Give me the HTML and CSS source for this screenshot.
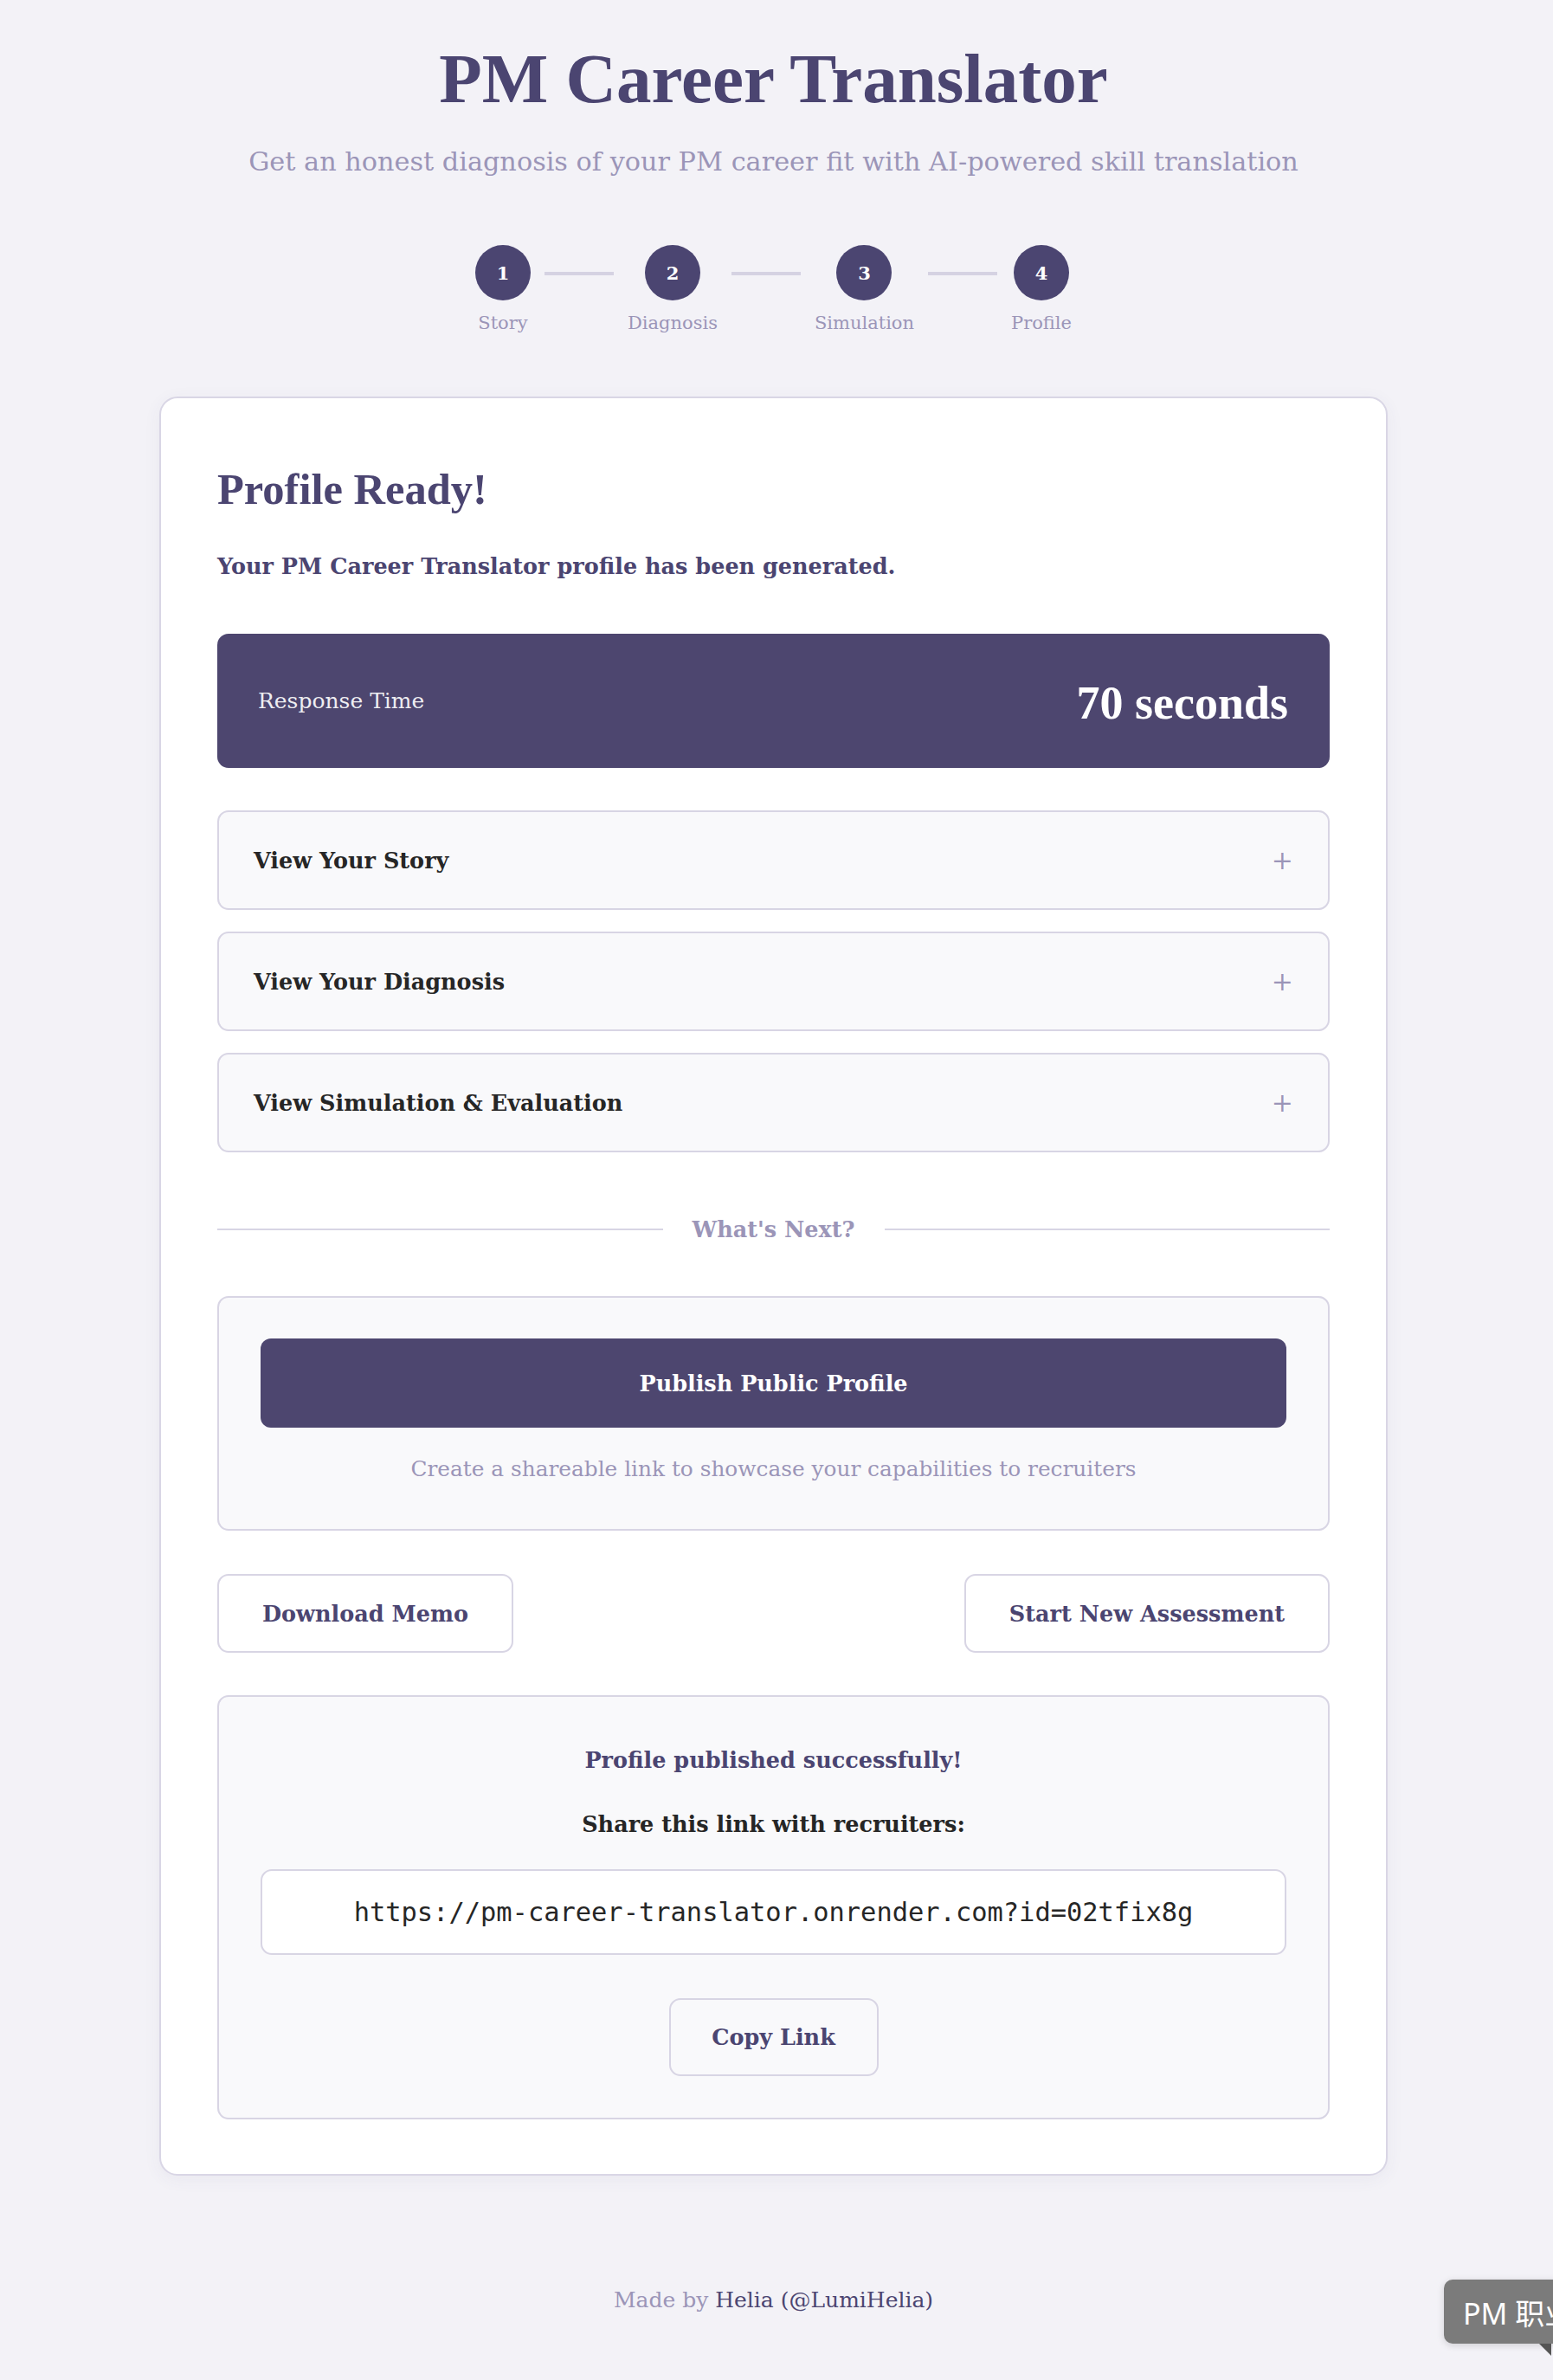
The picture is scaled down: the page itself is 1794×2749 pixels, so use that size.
FILE: index.html
```html
<!DOCTYPE html>
<html lang="en">
<head>
<meta charset="utf-8">
<title>PM Career Translator</title>
<link rel="stylesheet" href="styles.css">
</head>
<body>
<div class="page">
  <header class="header">
    <h1 class="title">PM Career Translator</h1>
    <p class="subtitle">Get an honest diagnosis of your PM career fit with AI-powered skill translation</p>
    <div class="steps">
      <div class="step"><div class="step-num">1</div><div class="step-label">Story</div></div>
      <div class="step-line"></div>
      <div class="step"><div class="step-num">2</div><div class="step-label">Diagnosis</div></div>
      <div class="step-line"></div>
      <div class="step"><div class="step-num">3</div><div class="step-label">Simulation</div></div>
      <div class="step-line"></div>
      <div class="step"><div class="step-num">4</div><div class="step-label">Profile</div></div>
    </div>
  </header>

  <main class="card">
    <h2 class="card-title">Profile Ready!</h2>
    <p class="card-lead">Your PM Career Translator profile has been generated.</p>

    <div class="metric">
      <span class="metric-label">Response Time</span>
      <span class="metric-value">70 seconds</span>
    </div>

    <div class="accordion">
      <div class="acc-item"><span class="acc-title">View Your Story</span><span class="acc-icon">+</span></div>
      <div class="acc-item"><span class="acc-title">View Your Diagnosis</span><span class="acc-icon">+</span></div>
      <div class="acc-item"><span class="acc-title">View Simulation &amp; Evaluation</span><span class="acc-icon">+</span></div>
    </div>

    <div class="divider"><span class="divider-line"></span><span class="divider-text">What's Next?</span><span class="divider-line"></span></div>

    <section class="publish">
      <button class="btn-primary">Publish Public Profile</button>
      <p class="publish-note">Create a shareable link to showcase your capabilities to recruiters</p>
    </section>

    <div class="actions">
      <button class="btn-outline">Download Memo</button>
      <button class="btn-outline">Start New Assessment</button>
    </div>

    <section class="success">
      <p class="success-title">Profile published successfully!</p>
      <p class="success-sub">Share this link with recruiters:</p>
      <input class="link-field" type="text" readonly value="https://pm-career-translator.onrender.com?id=02tfix8g">
      <button class="btn-copy">Copy Link</button>
    </section>
  </main>

  <footer class="footer">Made by <span class="footer-name">Helia (@LumiHelia)</span></footer>
</div>

<div class="float-tip">PM 职业<span class="tip-tail"></span></div>
</body>
</html>
```

FILE: styles.css
```css
* { box-sizing: border-box; }

html { background: #f3f2f7; }

body {
  margin: 0;
  min-height: 2749px;
  position: relative;
  overflow-x: hidden;
  font-family: "DejaVu Serif", "Liberation Serif", serif;
  color: #2a2a2a;
  background: #f3f2f7;
}

.page {
  width: 1787px;
  padding-top: 43px;
}

.header { text-align: center; }

.title {
  margin: 0;
  font-family: "Liberation Serif", serif;
  font-weight: 700;
  font-size: 81px;
  line-height: 96px;
  color: #4b4571;
}

.subtitle {
  margin: 28px 0 0;
  font-size: 30.3px;
  line-height: 40px;
  color: #9b95b8;
}

.steps {
  display: flex;
  justify-content: center;
  gap: 16px;
  margin-top: 76px;
}

.step {
  display: flex;
  flex-direction: column;
  align-items: center;
}

.step-num {
  width: 64px;
  height: 64px;
  border-radius: 50%;
  background: #4b4571;
  color: #fff;
  font-weight: 700;
  font-size: 21px;
  display: flex;
  align-items: center;
  justify-content: center;
}

.step-label {
  margin-top: 12px;
  font-size: 21px;
  line-height: 29px;
  color: #9b95b8;
}

.step-line {
  width: 80px;
  height: 4px;
  background: #d5d2e2;
  margin-top: 31px;
}

.card {
  display: block;
  width: 1419px;
  margin: 70px auto 0;
  background: #fff;
  border: 2px solid #d9d6e5;
  border-radius: 21px;
  padding: 76px 65px 63px;
  box-shadow: 0 4px 20px rgba(75, 69, 113, 0.06);
}

.card-title {
  margin: 0;
  font-family: "Liberation Serif", serif;
  font-weight: 700;
  font-size: 50.5px;
  line-height: 59px;
  color: #4b4571;
}

.card-lead {
  margin: 40px 0 0;
  font-weight: 700;
  font-size: 25.5px;
  line-height: 38px;
  color: #4b4571;
}

.metric {
  margin-top: 59px;
  height: 155px;
  background: #4d466f;
  border-radius: 13px;
  padding: 0 48px 0 47px;
  display: flex;
  align-items: center;
  justify-content: space-between;
  color: #fff;
}

.metric-label {
  font-size: 25px;
  color: rgba(255, 255, 255, 0.92);
}

.metric-value {
  font-family: "Liberation Serif", serif;
  font-weight: 700;
  font-size: 54px;
  margin-top: 4px;
}

.accordion {
  margin-top: 49px;
  display: flex;
  flex-direction: column;
  gap: 25px;
}

.acc-item {
  height: 115px;
  background: #f9f9fb;
  border: 2px solid #d8d5e4;
  border-radius: 13px;
  padding: 0 40px 0 40px;
  display: flex;
  align-items: center;
  justify-content: space-between;
}

.acc-title {
  font-weight: 700;
  font-size: 25.5px;
  color: #262626;
}

.acc-icon {
  font-family: "DejaVu Serif", serif;
  font-size: 30px;
  color: #9b95b8;
}

.divider {
  margin-top: 70px;
  height: 38px;
  display: flex;
  align-items: center;
  gap: 34px;
}

.divider-line {
  flex: 1;
  height: 2px;
  background: #d8d5e4;
}

.divider-text {
  font-weight: 700;
  font-size: 25.5px;
  line-height: 38px;
  color: #9b95b8;
}

.publish {
  margin-top: 58px;
  background: #f9f9fb;
  border: 2px solid #d8d5e4;
  border-radius: 13px;
  padding: 47px 48px 51px;
  text-align: center;
}

.btn-primary {
  display: block;
  width: 100%;
  height: 103px;
  border: none;
  border-radius: 12px;
  background: #4d466f;
  color: #fff;
  font-family: "DejaVu Serif", serif;
  font-weight: 700;
  font-size: 25.5px;
}

.publish-note {
  margin: 30px 0 0;
  font-size: 24.8px;
  line-height: 36px;
  color: #9b95b8;
}

.actions {
  margin-top: 50px;
  display: flex;
  justify-content: space-between;
}

.btn-outline {
  height: 91px;
  padding: 0 50px;
  white-space: nowrap;
  background: #fff;
  border: 2px solid #d8d5e4;
  border-radius: 13px;
  color: #4b4571;
  font-family: "DejaVu Serif", serif;
  font-weight: 700;
  font-size: 25.5px;
}

.success {
  margin-top: 49px;
  background: #f9f9fb;
  border: 2px solid #d8d5e4;
  border-radius: 13px;
  padding: 54px 48px 48px;
  display: flex;
  flex-direction: column;
  align-items: center;
  text-align: center;
}

.success-title {
  margin: 0;
  font-weight: 700;
  font-size: 25.5px;
  line-height: 38px;
  color: #4b4571;
}

.success-sub {
  margin: 36px 0 0;
  font-weight: 700;
  font-size: 25.5px;
  line-height: 38px;
  color: #262626;
}

.link-field {
  margin-top: 33px;
  width: 100%;
  height: 99px;
  background: #fff;
  border: 2px solid #d8d5e4;
  border-radius: 13px;
  text-align: center;
  font-family: "DejaVu Sans Mono", "Liberation Mono", monospace;
  font-size: 30.4px;
  color: #262626;
  outline: none;
}

.btn-copy {
  margin-top: 50px;
  width: 242px;
  height: 90px;
  background: #f9f9fb;
  border: 2px solid #d8d5e4;
  border-radius: 13px;
  color: #4b4571;
  font-family: "DejaVu Serif", serif;
  font-weight: 700;
  font-size: 25.5px;
}

.footer {
  margin-top: 126px;
  text-align: center;
  font-size: 25px;
  line-height: 36px;
  color: #9b95b8;
}

.footer-name { color: #4b4571; }

.float-tip {
  position: absolute;
  left: 1668px;
  top: 2633px;
  height: 74px;
  padding: 0 22px;
  display: flex;
  align-items: center;
  white-space: nowrap;
  background: #7b7b7b;
  border-radius: 10px 0 0 10px;
  color: #fff;
  font-family: "Noto Sans", "Noto Sans CJK SC", sans-serif;
  font-size: 34px;
  box-shadow: 0 2px 8px rgba(0, 0, 0, 0.15);
}

.tip-tail {
  position: absolute;
  left: 110px;
  top: 74px;
  width: 0;
  height: 0;
  border-left: 14px solid transparent;
  border-top: 14px solid #555;
}
```
